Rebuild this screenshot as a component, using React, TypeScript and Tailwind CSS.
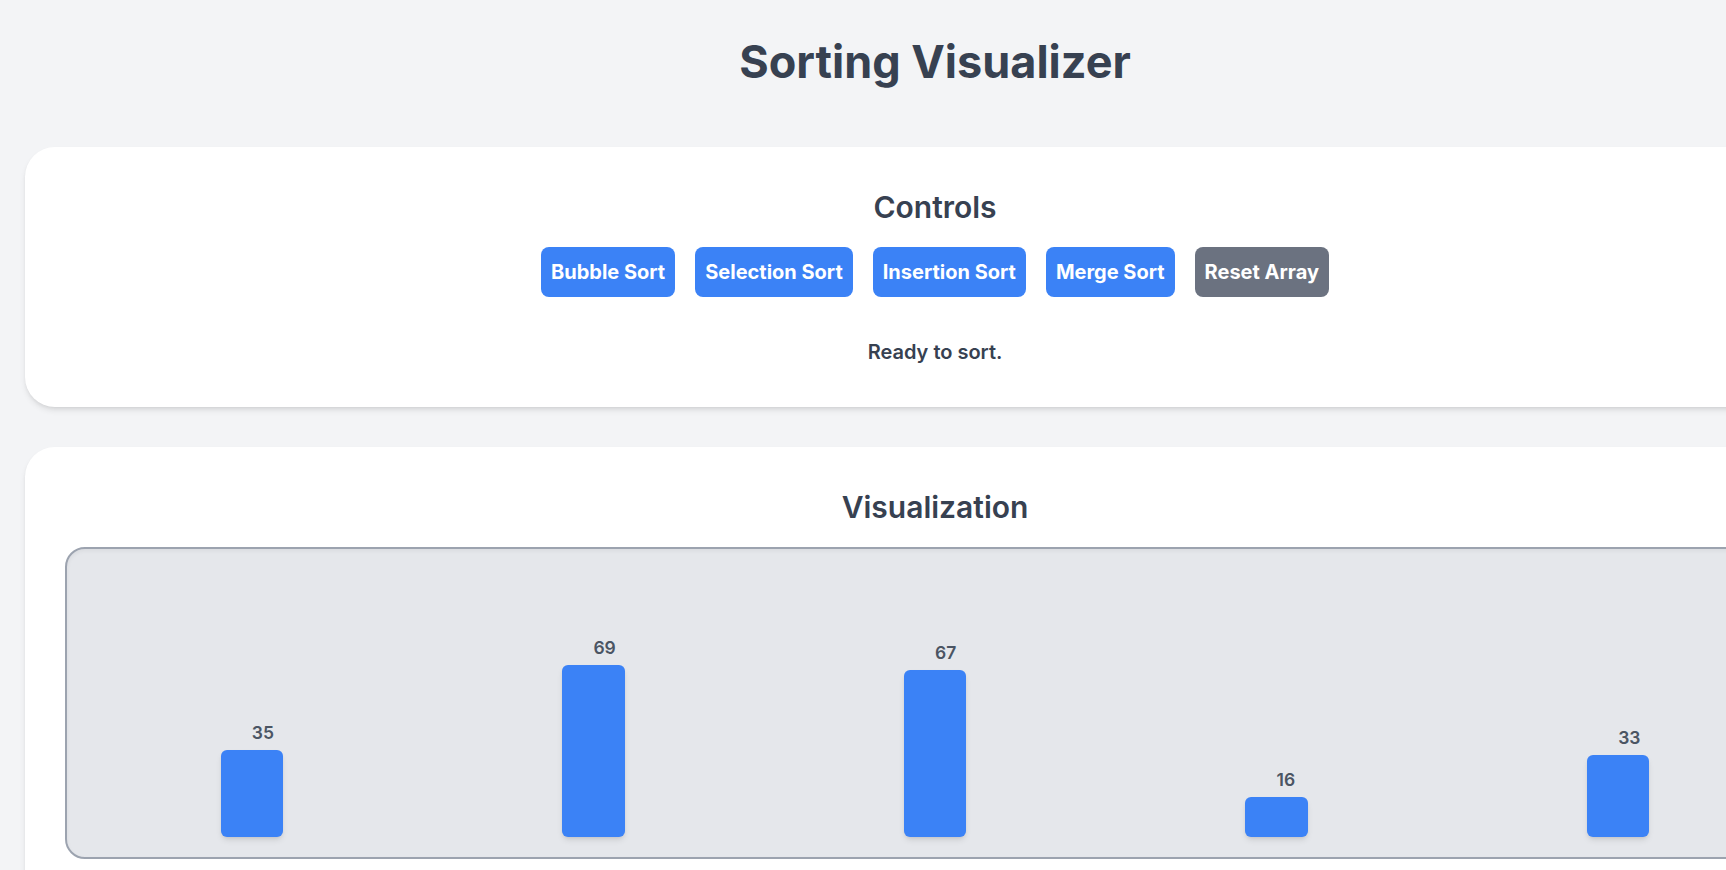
import React from "react";

const algorithms = ["Bubble Sort", "Selection Sort", "Insertion Sort", "Merge Sort"];
const initialArray = [35, 69, 67, 16, 33];

function ControlButton({ label, muted }: { label: string; muted?: boolean }) {
  return (
    <button
      className={
        muted
          ? "px-[10px] py-[10px] rounded-[8px] bg-[#6b7280] text-white text-[20px] leading-[30px] font-bold"
          : "px-[10px] py-[10px] rounded-[8px] bg-[#3b82f6] text-white text-[20px] leading-[30px] font-bold"
      }
    >
      {label}
    </button>
  );
}

function Bar({ value }: { value: number }) {
  return (
    <div
      className="relative w-[62.5px] rounded-[6px] bg-[#3b82f6] shadow-md"
      style={{ height: value * 2.5 }}
    >
      <span className="absolute -top-[30px] left-1/2 text-[17.5px] leading-[25px] font-semibold text-[#4b5563]">
        {value}
      </span>
    </div>
  );
}

export default function App() {
  return (
    <div className="h-screen w-full overflow-hidden bg-[#f3f4f6] font-['Inter',sans-serif] text-[#374151]">
      <div className="w-[1870px] px-[25px] pt-[37px]">
        <h1 className="text-center text-[45px] leading-[50px] font-bold mb-[60px]">
          Sorting Visualizer
        </h1>

        {/* controls */}
        <section className="bg-white rounded-[30px] shadow-md p-[40px] mb-[40px] flex flex-col items-center">
          <h2 className="text-[30px] leading-[40px] font-semibold mb-[20px]">Controls</h2>
          <div className="flex gap-[20px]">
            {algorithms.map((a) => (
              <ControlButton key={a} label={a} />
            ))}
            <ControlButton label="Reset Array" muted />
          </div>
          <p className="mt-[40px] text-[20px] leading-[30px] font-semibold">Ready to sort.</p>
        </section>

        {/* visualization */}
        <section className="bg-white rounded-[30px] shadow-md p-[40px] flex flex-col">
          <h2 className="text-center text-[30px] leading-[40px] font-semibold mb-[20px]">
            Visualization
          </h2>
          <div className="h-[312px] rounded-[20px] border-[2.5px] border-[#9ca3af] bg-[#e5e7eb] shadow-inner px-[14px] pb-[20px] flex items-end justify-around">
            {initialArray.map((v, i) => (
              <Bar key={i} value={v} />
            ))}
          </div>
          <div className="h-[40px]" />
        </section>
      </div>
    </div>
  );
}
